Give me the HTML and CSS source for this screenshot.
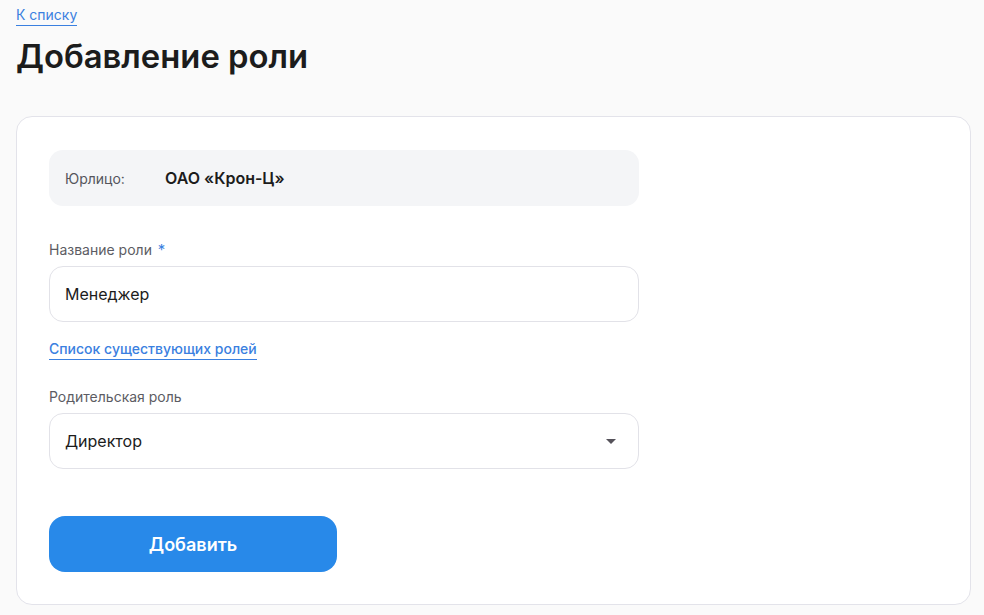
FILE: index.html
```html
<!DOCTYPE html>
<html lang="ru">
<head>
<meta charset="utf-8">
<link rel="stylesheet" href="styles.css">
</head>
<body>
<div class="page">
  <a class="back" href="#">К списку</a>
  <h1 class="title">Добавление роли</h1>
  <div class="card">
    <div class="info">
      <span class="info-label">Юрлицо:</span>
      <span class="info-value">ОАО «Крон-Ц»</span>
    </div>
    <div class="field">
      <div class="label">Название роли <span class="req">*</span></div>
      <div class="input">Менеджер</div>
    </div>
    <a class="roles-link" href="#">Список существующих ролей</a>
    <div class="field field-parent">
      <div class="label">Родительская роль</div>
      <div class="input select">
        <span>Директор</span>
        <svg class="arrow" width="10" height="5" viewBox="0 0 10 5"><path d="M0 0h10L5 5z" fill="#55525a"/></svg>
      </div>
    </div>
    <button class="btn">Добавить</button>
  </div>
</div>
</body>
</html>
```
FILE: styles.css
```css
* { box-sizing: border-box; }
html, body { margin: 0; padding: 0; }
body {
  background: #fafafa;
  font-family: Inter, "Noto Sans", sans-serif;
  color: #1f1f1f;
}
.page {
  padding: 5px 13px 0 16px;
  display: flex;
  flex-direction: column;
  align-items: flex-start;
}
.back {
  font-size: 14px;
  line-height: 20px;
  color: #3a80e0;
  text-decoration: none;
  border-bottom: 1px solid #3a80e0;
  padding-bottom: 0px;
}
.title {
  margin: 10px 0 0 0;
  font-size: 32.8px;
  line-height: 40px;
  font-weight: 600;
  color: #1c1c1c;
  letter-spacing: 0;
}
.card {
  align-self: stretch;
  margin-top: 40px;
  background: #fff;
  border: 1px solid #e3e3ea;
  border-radius: 16px;
  padding: 33px 32px 32px 32px;
  display: flex;
  flex-direction: column;
  align-items: flex-start;
  height: 489px;
}
.info {
  width: 590px;
  height: 56px;
  background: #f4f5f7;
  border-radius: 14px;
  display: flex;
  align-items: center;
  padding-left: 16px;
}
.info-label {
  width: 100px;
  font-size: 14px;
  color: #55555c;
}
.info-value {
  font-size: 16px;
  font-weight: 600;
  color: #1c1c1c;
}
.field {
  margin-top: 34px;
  display: flex;
  flex-direction: column;
}
.label {
  font-size: 14px;
  line-height: 20px;
  color: #5c5c63;
  margin-bottom: 6px;
}
.req { color: #3a80e0; font-size: 15px; margin-left: 2px; }
.input {
  width: 590px;
  height: 56px;
  border: 1px solid #e2e2e8;
  border-radius: 14px;
  padding: 0 15px;
  display: flex;
  align-items: center;
  font-size: 16px;
  color: #1c1c1c;
}
.select { justify-content: space-between; padding-right: 22px; }
.roles-link {
  margin-top: 17px;
  font-size: 14px;
  line-height: 20px;
  font-weight: 500;
  color: #3a80e0;
  text-decoration: none;
  border-bottom: 1px solid #3a80e0;
}
.field-parent { margin-top: 27px; }
.btn {
  margin-top: 47px;
  width: 288px;
  height: 56px;
  border: none;
  border-radius: 16px;
  background: #2889e9;
  color: #fff;
  font-family: Inter, "Noto Sans", sans-serif;
  font-size: 18px;
  font-weight: 600;
}
```
